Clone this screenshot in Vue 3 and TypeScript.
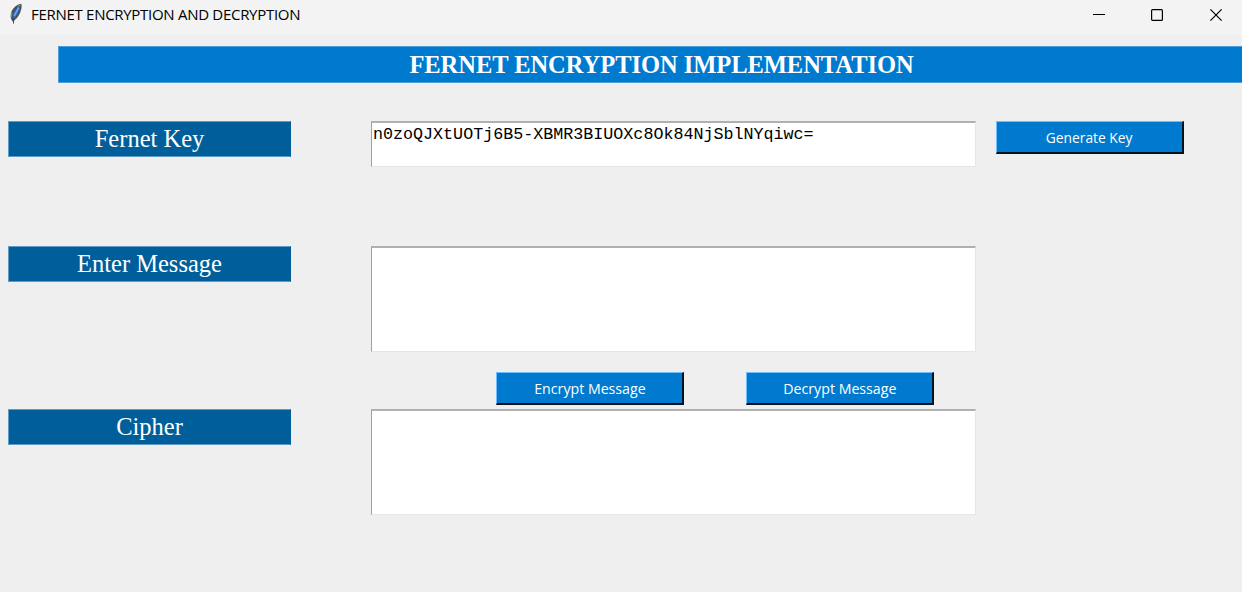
<script setup lang="ts">
import { ref } from 'vue'

const fernetKey = ref('n0zoQJXtUOTj6B5-XBMR3BIUOXc8Ok84NjSblNYqiwc=')
const message = ref('')
const cipher = ref('')
</script>

<template>
  <div class="window">
    <header class="titlebar">
      <svg class="feather" width="14" height="22" viewBox="0 0 14 22">
        <path d="M12.4 .8 C8.5 1.2 4.2 4.5 2.3 9 C1.2 12 1.6 15 2.6 17 L4.2 19 L5.8 17 C9 14.5 11 11 12 7 C12.6 5 12.8 3 12.4 .8Z" fill="#4a5358" />
        <path d="M10.6 3.2 C7 4.8 4.2 9.5 3.7 14 L5.2 15.8 C8.2 13 10.4 8 10.6 3.2Z" fill="#2866c5" />
        <path d="M9.8 4.5 L5.2 13" stroke="#69a8f2" stroke-width="1.6" />
        <path d="M11.6 1.8 L8.5 3.4 M2.8 9 L2.3 14" stroke="#8b969b" stroke-width="1" />
        <path d="M4.5 15 V20.5" stroke="#40474d" stroke-width="1" />
      </svg>
      <span class="caption">FERNET ENCRYPTION AND DECRYPTION</span>
      <div class="controls">
        <svg width="13" height="13" viewBox="0 0 13 13"><path d="M0 5.5H12" stroke="#000" /></svg>
        <svg width="13" height="13" viewBox="0 0 13 13"><rect x=".6" y=".6" width="10.8" height="10.8" rx="1" fill="none" stroke="#000" stroke-width="1.2" /></svg>
        <svg class="close" width="13" height="13" viewBox="0 0 13 13"><path d="M.4 .4L11.6 11.6M11.6 .4L.4 11.6" stroke="#000" stroke-width="1.2" /></svg>
      </div>
    </header>
    <h1 class="banner">FERNET ENCRYPTION IMPLEMENTATION</h1>
    <main class="form">
      <div class="row key-row">
        <div class="label">Fernet Key</div>
        <div class="field short">{{ fernetKey }}</div>
        <button class="btn"><span class="generate">Generate Key</span></button>
      </div>
      <div class="row message-row">
        <div class="label">Enter Message</div>
        <div class="field">{{ message }}</div>
      </div>
      <div class="actions">
        <button class="btn"><span>Encrypt Message</span></button>
        <button class="btn"><span>Decrypt Message</span></button>
      </div>
      <div class="row">
        <div class="label">Cipher</div>
        <div class="field">{{ cipher }}</div>
      </div>
    </main>
  </div>
</template>

<style>
body { margin: 0; background: #efefef; }
</style>

<style scoped>
.window {
  width: 1242px;
  height: 592px;
  overflow: hidden;
  background: #efefef;
}
.titlebar {
  display: flex;
  height: 35px;
  background: #f3f3f3;
  box-sizing: border-box;
  padding-left: 9px;
}
.feather { margin-top: 3px; flex: none; }
.caption {
  margin-left: 8px;
  font: 15px/28px "Open Sans", "Noto Sans", sans-serif;
  letter-spacing: -0.29px;
  color: #000;
  white-space: nowrap;
}
.controls {
  display: flex;
  gap: 45px;
  margin: 9px 19px 0 auto;
}
.controls svg { display: block; }
.controls .close { margin-left: 1px; }
.banner {
  margin: 11px 0 0 58px;
  height: 37px;
  box-sizing: border-box;
  border: solid #4d9fd9;
  border-width: 1px 0 1px 1px;
  background: #007acf;
  color: #fff;
  font: bold 24.5px/35px "Liberation Serif", serif;
  letter-spacing: -0.04px;
  text-align: center;
  padding-left: 22px;
  white-space: nowrap;
}
.form { padding: 38px 0 0 8px; }
.row {
  display: grid;
  grid-template-columns: 283px 685px 188px;
  align-items: start;
}
.row .field { margin-left: 80px; }
.row .btn { margin-left: 20px; width: 188px; }
.key-row { height: 125px; }
.message-row { height: 126px; }
.label {
  height: 36px;
  box-sizing: border-box;
  border: 1px solid #5f9cc4;
  border-right-color: #005f9b;
  background: #005f9b;
  color: #fff;
  font: 24.5px/34px "Liberation Serif", serif;
  text-align: center;
  white-space: nowrap;
}
.field {
  height: 106px;
  box-sizing: border-box;
  border: 1px solid #e6e6e6;
  border-top: 2px solid #b0b0b0;
  border-left: 1px solid #a0a0a0;
  background: #fff;
  color: #000;
  padding: 2px 1px 0;
  font: 16.7px/20px "Liberation Mono", monospace;
  white-space: pre;
}
.short { height: 46px; }
.btn {
  display: block;
  width: 188px;
  height: 33px;
  box-sizing: border-box;
  padding: 0;
  border: solid;
  border-width: 1px 2px 2px 1px;
  border-color: #73bcff #05121c #05121c #73bcff;
  background: #007acf;
  color: #fff;
  font: 15px/29px "Open Sans", "Noto Sans", sans-serif;
  text-align: center;
  white-space: nowrap;
}
.btn span {
  display: inline-block;
  transform: scaleX(0.945);
}
.btn .generate { transform: scaleX(0.92); }
.actions {
  display: flex;
  gap: 62px;
  height: 37px;
  padding-left: 488px;
}
</style>
